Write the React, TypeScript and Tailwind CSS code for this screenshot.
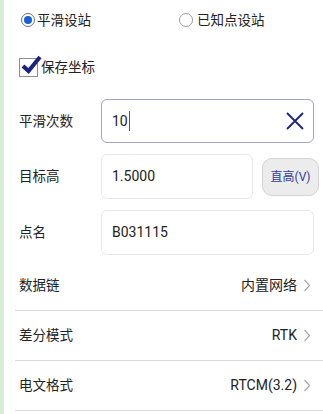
import { useState } from "react";

const font = "font-['Roboto','Noto_Sans_CJK_SC',sans-serif]";

function Chevron() {
  return (
    <svg width="8" height="13" viewBox="0 0 8 13" className="ml-[6px]">
      <polyline points="1.5,1 6.5,6.5 1.5,12" fill="none" stroke="#a8a8a8" strokeWidth="1.2" />
    </svg>
  );
}

function ListRow({ label, value }: { label: string; value: string }) {
  return (
    <div className="flex h-[50px] items-center justify-between border-b border-[#d9d9d9] pl-[4px] pr-[12px]">
      <span className="text-[13.5px] text-[#222]">{label}</span>
      <span className="flex items-center text-[14px] text-[#222]">
        {value}
        <Chevron />
      </span>
    </div>
  );
}

export default function App() {
  const [mode, setMode] = useState("smooth");
  const [save, setSave] = useState(true);

  return (
    <div className={`flex h-[414px] w-[323px] overflow-hidden bg-white ${font}`}>
      {/* 左侧绿色条 */}
      <div className="w-[4px] shrink-0 bg-[#d5eed5]" />

      <div className="flex-1">
        {/* 设站方式 */}
        <div className="flex h-[40px] items-center">
          <button onClick={() => setMode("smooth")} className="ml-[17px] flex w-[158px] items-center">
            <span className="flex h-[14px] w-[14px] items-center justify-center rounded-full border-[1.5px] border-[#6f6f6f]">
              {mode === "smooth" && <span className="h-[8px] w-[8px] rounded-full bg-[#1a5fd6]" />}
            </span>
            <span className="ml-[2px] text-[13.5px] text-[#222]">平滑设站</span>
          </button>
          <button onClick={() => setMode("known")} className="flex items-center">
            <span className="flex h-[14px] w-[14px] items-center justify-center rounded-full border-[1.5px] border-[#9a9a9a]">
              {mode === "known" && <span className="h-[8px] w-[8px] rounded-full bg-[#1a5fd6]" />}
            </span>
            <span className="ml-[4px] text-[13.5px] text-[#222]">已知点设站</span>
          </button>
        </div>

        {/* 保存坐标 */}
        <div className="flex h-[55px] items-center">
          <button onClick={() => setSave(!save)} className="ml-[15px] flex items-center">
            <span className="relative h-[19px] w-[19px] border border-[#8d8d8d]">
              {save && (
                <svg width="22" height="20" viewBox="0 0 22 20" className="absolute -top-[4px] left-[1px]">
                  <polyline points="2,11 7.5,16 19,2" fill="none" stroke="#1a237e" strokeWidth="4" strokeLinejoin="miter" />
                </svg>
              )}
            </span>
            <span className="ml-[3px] text-[13.5px] text-[#222]">保存坐标</span>
          </button>
        </div>

        {/* 平滑次数 */}
        <div className="mt-[4px] flex items-center">
          <span className="ml-[15px] w-[82px] text-[13.5px] text-[#222]">平滑次数</span>
          <div className="flex h-[44px] w-[213px] items-center rounded-[6px] border border-[#a3a3c9] pl-[10px] pr-[8px]">
            <span className="text-[14px] text-[#222]">10</span>
            <span className="ml-[1px] h-[20px] w-[1px] bg-[#555]" />
            <svg width="20" height="20" viewBox="0 0 20 20" className="ml-auto">
              <path d="M2 2 L18 18 M18 2 L2 18" stroke="#1a237e" strokeWidth="1.8" fill="none" />
            </svg>
          </div>
        </div>

        {/* 目标高 */}
        <div className="mt-[11px] flex items-center">
          <span className="ml-[15px] w-[82px] text-[13.5px] text-[#222]">目标高</span>
          <div className="flex h-[45px] w-[152px] items-center rounded-[6px] border border-[#e8e8e8] pl-[10px]">
            <span className="text-[14px] text-[#222]">1.5000</span>
          </div>
          <button className="ml-[9px] h-[38px] w-[57px] rounded-[10px] border border-[#d4d4d4] bg-[#ececec] text-[12px] text-[#2f3b9c]">
            直高(V)
          </button>
        </div>

        {/* 点名 */}
        <div className="mt-[11px] flex items-center">
          <span className="ml-[15px] w-[82px] text-[13.5px] text-[#222]">点名</span>
          <div className="flex h-[45px] w-[213px] items-center rounded-[6px] border border-[#e8e8e8] pl-[10px]">
            <span className="text-[14px] text-[#222]">B031115</span>
          </div>
        </div>

        {/* 列表 */}
        <div className="ml-[11px] mt-[6px]">
          <ListRow label="数据链" value="内置网络" />
          <ListRow label="差分模式" value="RTK" />
          <ListRow label="电文格式" value="RTCM(3.2)" />
        </div>
      </div>
    </div>
  );
}
